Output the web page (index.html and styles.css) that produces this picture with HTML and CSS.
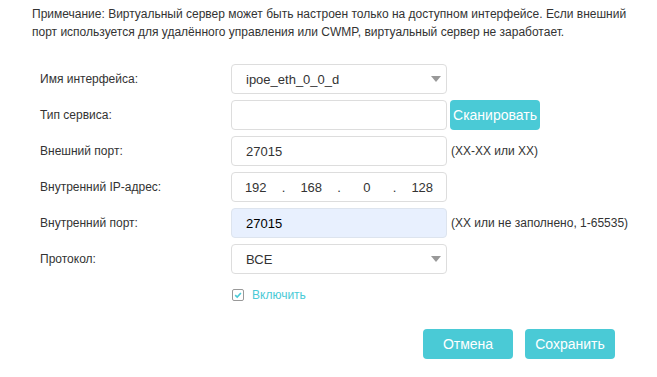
FILE: index.html
```html
<!DOCTYPE html>
<html lang="ru">
<head>
<meta charset="utf-8">
<title>Виртуальный сервер</title>
<link rel="stylesheet" href="styles.css">
</head>
<body>
<p class="note">Примечание: Виртуальный сервер может быть настроен только на доступном интерфейсе. Если внешний<br>порт используется для удалённого управления или CWMP, виртуальный сервер не заработает.</p>
<form class="form">
  <div class="row">
    <label class="label">Имя интерфейса:</label>
    <div class="field select"><span>ipoe_eth_0_0_d</span><svg class="arrow" width="10" height="6" viewBox="0 0 10 6"><path d="M0 0H10L5 6Z" fill="#999"/></svg></div>
  </div>
  <div class="row">
    <label class="label">Тип сервиса:</label>
    <div class="field"></div>
    <button type="button" class="btn scan">Сканировать</button>
  </div>
  <div class="row">
    <label class="label">Внешний порт:</label>
    <div class="field">27015</div>
    <span class="hint">(XX-XX или XX)</span>
  </div>
  <div class="row">
    <label class="label">Внутренний IP-адрес:</label>
    <div class="field ip"><span>192</span><span>.</span><span>168</span><span>.</span><span>0</span><span>.</span><span>128</span></div>
  </div>
  <div class="row">
    <label class="label">Внутренний порт:</label>
    <div class="field focused">27015</div>
    <span class="hint">(XX или не заполнено, 1-65535)</span>
  </div>
  <div class="row">
    <label class="label">Протокол:</label>
    <div class="field select"><span>ВСЕ</span><svg class="arrow" width="10" height="6" viewBox="0 0 10 6"><path d="M0 0H10L5 6Z" fill="#999"/></svg></div>
  </div>
  <div class="row check-row">
    <span class="checkbox"><svg width="10" height="10" viewBox="0 0 10 10"><path d="M2.2 5.2L4.2 7.1L7.9 3" fill="none" stroke="#4acad6" stroke-width="1.6"/></svg></span>
    <span class="check-label">Включить</span>
  </div>
  <div class="actions">
    <button type="button" class="btn action">Отмена</button>
    <button type="button" class="btn action">Сохранить</button>
  </div>
</form>
</body>
</html>
```
FILE: styles.css
```css
* { box-sizing: border-box; }
body {
  margin: 0;
  font-family: "Liberation Sans", Arial, sans-serif;
  font-size: 12px;
  color: #333;
  background: #fff;
}
.note {
  margin: 0;
  padding: 5px 0 0 32px;
  line-height: 18px;
  color: #333;
  white-space: nowrap;
}
.form {
  margin-top: 23px;
  padding-left: 40px;
}
.row {
  display: flex;
  align-items: center;
  height: 30px;
  margin-bottom: 6px;
}
.label {
  width: 191px;
  color: #333;
}
.field {
  width: 216px;
  height: 30px;
  border: 1px solid #ddd;
  border-radius: 4px;
  padding: 0 14px;
  display: flex;
  align-items: center;
  font-size: 13px;
  color: #333;
  background: #fff;
}
.select {
  justify-content: space-between;
  padding-right: 5px;
}
.arrow { display: block; }
.ip {
  display: grid;
  grid-template-columns: 1fr 8px 1fr 8px 1fr 8px 1fr;
  padding: 0;
  text-align: center;
}
.focused {
  background: #e8f0fe;
  border-color: #dde4ee;
  color: #000;
}
.hint {
  margin-left: 4px;
  color: #333;
}
.btn {
  border: none;
  background: #4acad6;
  color: #fff;
  font-family: "Liberation Sans", Arial, sans-serif;
  font-size: 14px;
  border-radius: 4px;
  width: 90px;
  height: 30px;
  padding: 0;
  cursor: pointer;
}
.scan { margin-left: 3px; }
.check-row {
  padding-left: 192px;
  margin-bottom: 0;
}
.checkbox {
  width: 12px;
  height: 12px;
  border: 1px solid #999;
  border-radius: 2px;
  display: flex;
  align-items: center;
  justify-content: center;
  margin-right: 8px;
}
.checkbox svg { display: block; }
.check-label { color: #4acad6; }
.actions {
  display: flex;
  justify-content: flex-end;
  gap: 12px;
  padding-right: 42px;
  margin-top: 19px;
}
```
